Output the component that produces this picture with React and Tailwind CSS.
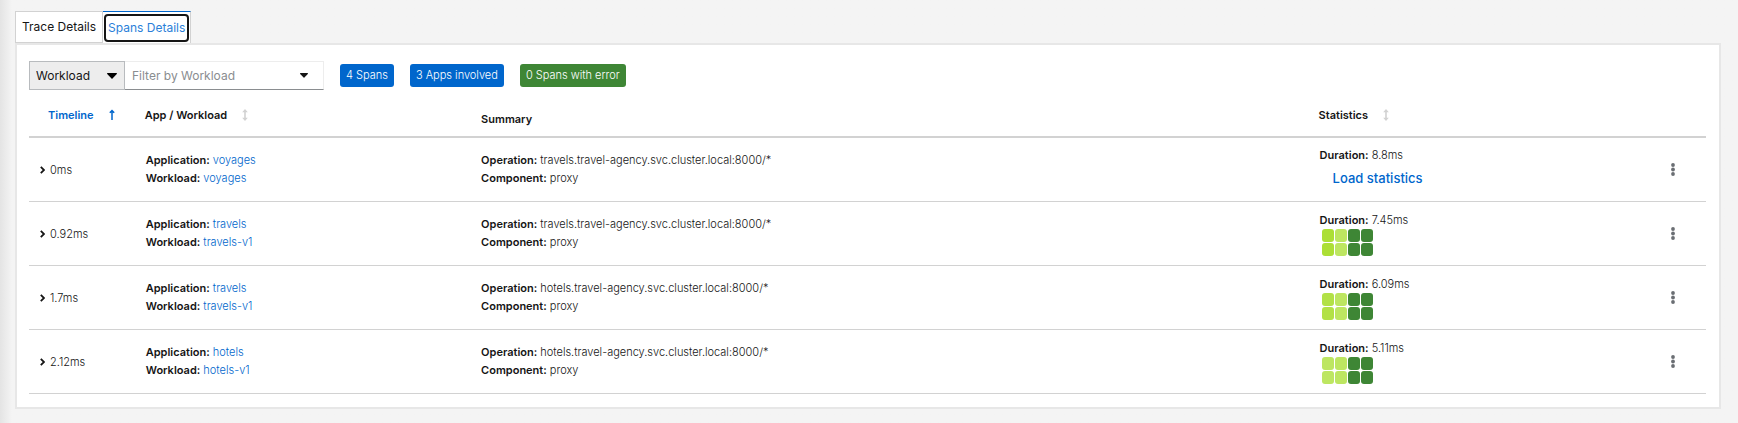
import { useState } from 'react';

const LIME = '#acdf35';
const PALE = '#bde661';
const GREEN = '#3e8635';

const SPANS = [
  {
    time: '0ms',
    app: 'voyages',
    workload: 'voyages',
    operation: 'travels.travel-agency.svc.cluster.local:8000/*',
    duration: '8.8ms',
  },
  {
    time: '0.92ms',
    app: 'travels',
    workload: 'travels-v1',
    operation: 'travels.travel-agency.svc.cluster.local:8000/*',
    duration: '7.45ms',
    stats: [LIME, PALE, GREEN, GREEN],
  },
  {
    time: '1.7ms',
    app: 'travels',
    workload: 'travels-v1',
    operation: 'hotels.travel-agency.svc.cluster.local:8000/*',
    duration: '6.09ms',
    stats: ['#b2e146', PALE, GREEN, GREEN],
  },
  {
    time: '2.12ms',
    app: 'hotels',
    workload: 'hotels-v1',
    operation: 'hotels.travel-agency.svc.cluster.local:8000/*',
    duration: '5.11ms',
    stats: [PALE, PALE, GREEN, GREEN],
  },
];

function Caret({ className }) {
  return (
    <svg viewBox="0 0 10 6" className={className} aria-hidden="true">
      <path d="M0.6 0h8.8c.5 0 .8.6.4 1L5.5 5.6c-.3.3-.7.3-1 0L.2 1C-.2.6.1 0 .6 0z" fill="currentColor" />
    </svg>
  );
}

function SortUp() {
  return (
    <svg viewBox="0 0 6 12" className="h-3 w-[6px]" aria-hidden="true">
      <path d="M3 11V1M0.8 3.8 3 1.6 5.2 3.8" fill="none" stroke="currentColor" strokeWidth="1.5" />
    </svg>
  );
}

function SortBoth() {
  return (
    <svg viewBox="0 0 6 12" className="h-3 w-[6px] text-[#d2d2d2]" aria-hidden="true">
      <path d="M3 0 5.8 3.2H3.8v5.6h2L3 12 .2 8.8h2V3.2h-2z" fill="currentColor" />
    </svg>
  );
}

function Badge({ className, children }) {
  return (
    <span className={`rounded-[3px] px-[6px] text-[11px] leading-[23px] font-light text-white ${className}`}>
      {children}
    </span>
  );
}

function Field({ label, children }) {
  return (
    <div>
      <span className="font-semibold">{label}:</span> {children}
    </div>
  );
}

function HeatMap({ colors }) {
  return (
    <div className="ml-[2px] grid w-[51px] grid-cols-4 gap-px">
      {[...colors, ...colors].map((color, i) => (
        <div key={i} className="h-[13px] rounded-[3px]" style={{ backgroundColor: color }} />
      ))}
    </div>
  );
}

function SpanRow({ span }) {
  const [open, setOpen] = useState(false);

  return (
    <tr className="h-16 border-b border-[#d2d2d2] font-light">
      <td className="pt-px pl-[11px]">
        <button type="button" aria-expanded={open} onClick={() => setOpen(!open)} className="flex items-center gap-[5px]">
          <svg viewBox="0 0 5 8" className="h-2 w-[5px]" aria-hidden="true">
            <path d="M0.8 0.8 4 4 0.8 7.2" fill="none" stroke="currentColor" strokeWidth="1.8" />
          </svg>
          {span.time}
        </button>
      </td>
      <td className="px-[6px]">
        <Field label="Application">
          <a href="#app" className="text-[#0066cc]">{span.app}</a>
        </Field>
        <Field label="Workload">
          <a href="#workload" className="text-[#0066cc]">{span.workload}</a>
        </Field>
      </td>
      <td className="px-[6px]">
        <Field label="Operation">{span.operation}</Field>
        <Field label="Component">proxy</Field>
      </td>
      <td className="px-[6px]">
        <Field label="Duration">{span.duration}</Field>
        {span.stats ? (
          <HeatMap colors={span.stats} />
        ) : (
          <button type="button" className="block px-[13px] text-[13px] leading-7 font-medium text-[#0066cc]">
            Load statistics
          </button>
        )}
      </td>
      <td>
        <button type="button" aria-label="Actions" className="ml-[18px] block p-1 text-[#6a6e73]">
          <svg viewBox="0 0 4 13" className="h-[13px] w-1">
            <circle cx="2" cy="2" r="1.9" fill="currentColor" />
            <circle cx="2" cy="6.5" r="1.9" fill="currentColor" />
            <circle cx="2" cy="11" r="1.9" fill="currentColor" />
          </svg>
        </button>
      </td>
    </tr>
  );
}

export default function App() {
  const [filter, setFilter] = useState('');

  return (
    <div className="min-h-screen bg-[#f4f4f4] bg-linear-to-r from-[#e4e4e4] to-[#f4f4f4] to-[12px] pt-[11px] pr-[17px] pb-3 pl-[15px] font-['Inter',sans-serif] text-[#151515]">
      <div role="tablist" className="flex h-8 text-xs">
        <button type="button" role="tab" aria-selected="false" className="border border-[#d2d2d2] bg-white px-[6px]">
          Trace Details
        </button>
        <button type="button" role="tab" aria-selected="true" className="border-t border-r border-t-[#0066cc] border-r-[#d2d2d2] bg-white p-px text-[#2b7fd9]">
          <span className="flex h-7 items-center rounded-[4px] border-2 border-[#151515] px-[2px]">Spans Details</span>
        </button>
      </div>

      <main className="border-2 border-[#e7e7e7] bg-white pt-4 pr-[13px] pb-[13px] pl-3">
        <div className="flex items-center">
          <div className="relative">
            <select aria-label="Filter type" className="h-[29px] w-24 appearance-none border border-[#b8bbbe] bg-[#ededed] pl-[6px] text-xs">
              <option>Workload</option>
            </select>
            <Caret className="pointer-events-none absolute top-3 right-2 h-[6px] w-[10px] text-black" />
          </div>
          <div className="flex h-[29px] w-[199px] items-center border border-l-0 border-[#ededed] border-b-[#8a8d90]">
            <input
              type="text"
              aria-label="Filter by Workload"
              placeholder="Filter by Workload"
              value={filter}
              onChange={(e) => setFilter(e.target.value)}
              className="min-w-0 flex-1 pl-[7px] text-xs placeholder-[#8a8d90] focus:outline-none"
            />
            <button type="button" aria-label="Show workloads" className="px-[15px]">
              <Caret className="h-[5px] w-2" />
            </button>
          </div>
          <div className="ml-4 flex gap-4">
            <Badge className="bg-[#0066cc]">4 Spans</Badge>
            <Badge className="bg-[#0066cc]">3 Apps involved</Badge>
            <Badge className="bg-[#3e8635]">0 Spans with error</Badge>
          </div>
        </div>

        <table className="mt-[7px] w-full table-fixed border-collapse text-[11px] leading-[18px]">
          <colgroup>
            <col />
            <col className="w-1/5" />
            <col className="w-1/2" />
            <col className="w-1/5" />
            <col className="w-[57px]" />
          </colgroup>
          <thead>
            <tr className="h-10 border-b-2 border-[#d2d2d2] text-left">
              <th className="pb-[3px] pl-[19px] font-semibold" aria-sort="ascending">
                <button type="button" className="flex items-center gap-[15px] text-[#0066cc]">
                  Timeline <SortUp />
                </button>
              </th>
              <th className="pb-[3px] pl-[5px] font-semibold">
                <button type="button" className="flex items-center gap-[15px]">
                  App / Workload <SortBoth />
                </button>
              </th>
              <th className="px-[6px] pt-1 font-semibold">Summary</th>
              <th className="pb-[3px] pl-[5px] font-semibold">
                <button type="button" className="flex items-center gap-[15px]">
                  Statistics <SortBoth />
                </button>
              </th>
              <td />
            </tr>
          </thead>
          <tbody>
            {SPANS.map((span) => (
              <SpanRow key={span.time} span={span} />
            ))}
          </tbody>
        </table>
      </main>
    </div>
  );
}
